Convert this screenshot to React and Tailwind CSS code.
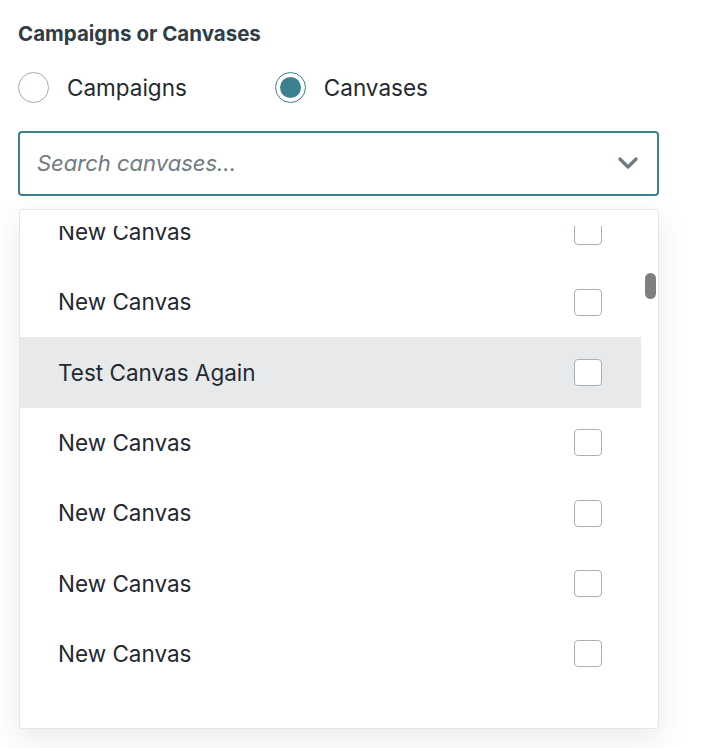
const rows = [
  'New Canvas',
  'New Canvas',
  'Test Canvas Again',
  'New Canvas',
  'New Canvas',
  'New Canvas',
  'New Canvas',
]

function Radio({ checked, label }) {
  return (
    <label className="flex items-center gap-[18px]">
      {checked ? (
        <span className="flex h-[31px] w-[31px] items-center justify-center rounded-full border-[1.5px] border-[#3b8190] bg-white">
          <span className="h-[21px] w-[21px] rounded-full bg-[#3b8190]" />
        </span>
      ) : (
        <span className="h-[31px] w-[31px] rounded-full border border-[#a3abb1] bg-white" />
      )}
      <span className="text-[22.5px] text-[#1f2a33]">{label}</span>
    </label>
  )
}

export default function App() {
  return (
    <div className="min-h-[748px] bg-white pl-[18px] pr-[51px] pt-[22px] font-['Inter',sans-serif]">
      <h3 className="text-[20.5px] font-bold leading-6 text-[#2f3d4a]">Campaigns or Canvases</h3>

      <div className="mt-[25px] flex items-center gap-[88px]">
        <Radio label="Campaigns" />
        <Radio checked label="Canvases" />
      </div>

      <div className="relative mt-[26px]">
        <div className="flex h-[65px] items-center justify-between rounded-[4px] border-2 border-[#3b8190] bg-white pl-[17px] pr-[19px]">
          <span className="text-[22px] italic text-[#6f7a82]">Search canvases...</span>
          <svg width="20" height="12" viewBox="0 0 20 12" fill="none">
            <path d="M2 2l8 8 8-8" stroke="#6c7a83" strokeWidth="3.2" strokeLinecap="round" strokeLinejoin="round" />
          </svg>
        </div>

        <div className="absolute left-px top-full z-10 mt-[13px] h-[520px] w-[640px] rounded-[3px] border border-[#e3e6e8] bg-white py-[16px] shadow-[0_10px_30px_rgba(40,50,60,0.10)]">
          <div className="h-full overflow-hidden">
            <div className="mt-[-29px] w-[621px]">
              {rows.map((name, i) => (
                <div
                  key={i}
                  className={`flex h-[70.3px] items-center justify-between pl-[38px] pr-[39px] ${
                    i === 2 ? 'bg-[#e8e9eb]' : ''
                  }`}
                >
                  <span className="text-[22.5px] text-[#1f2a33]">{name}</span>
                  <span className="h-[27px] w-[28px] rounded-[4px] border border-[#a9b1b7] bg-white" />
                </div>
              ))}
            </div>
          </div>
          <div className="absolute right-[2px] top-[63px] h-[26px] w-[11px] rounded-full bg-[#7f7f7f]" />
        </div>
      </div>
    </div>
  )
}
